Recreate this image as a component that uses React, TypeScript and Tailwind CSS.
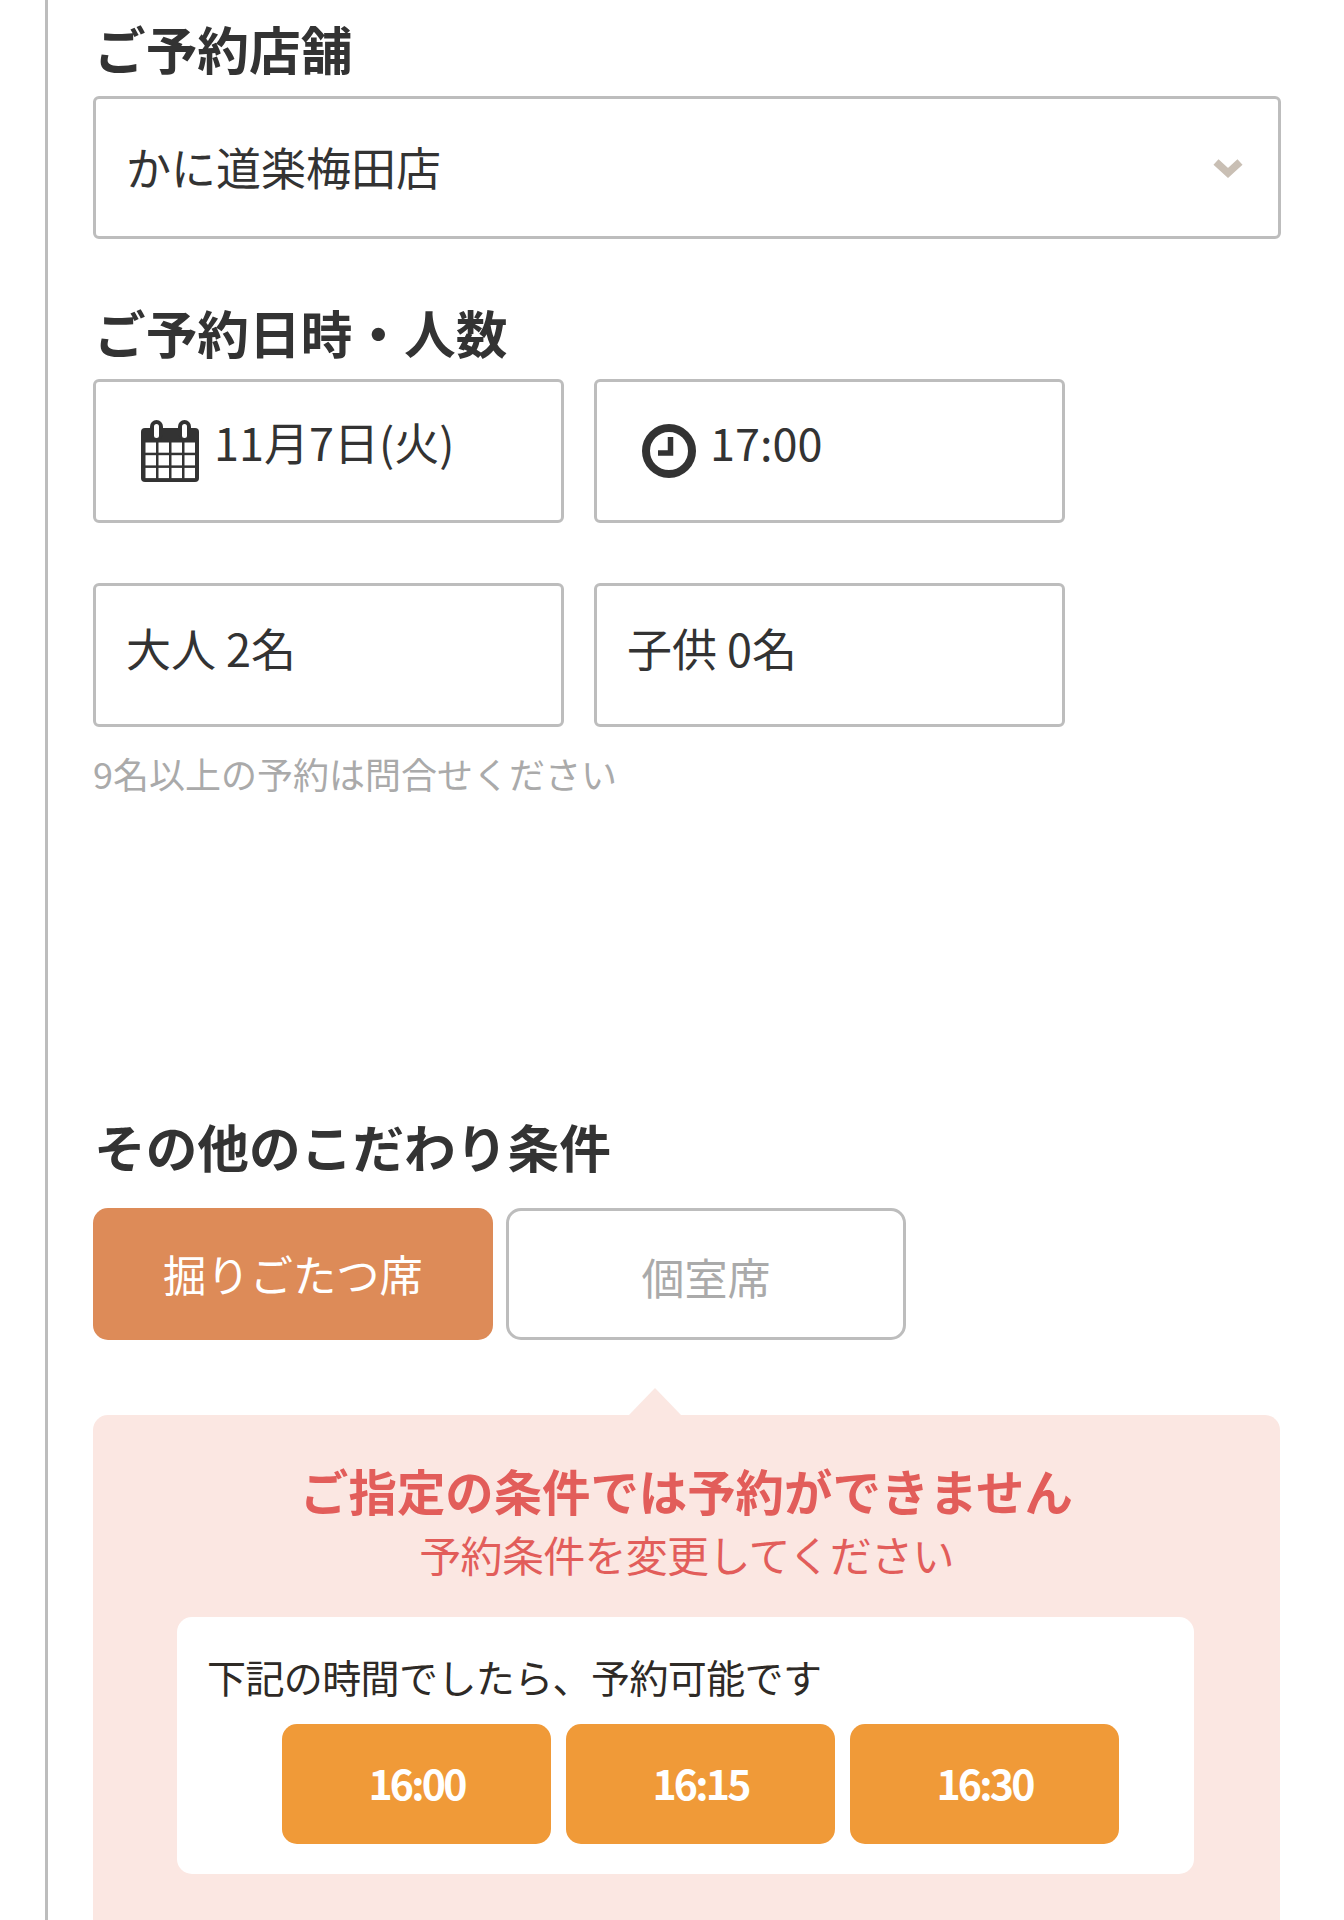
import React from "react";

const font = { fontFamily: '"Noto Sans CJK JP", "Noto Sans", sans-serif' };

function CalendarIcon() {
  const cells = [];
  for (let r = 0; r < 3; r++) {
    for (let c = 0; c < 4; c++) {
      cells.push(<rect key={`${r}-${c}`} x={4.5 + c * 13} y={22.5 + r * 12.7} width="10.5" height="10.2" fill="#fff" />);
    }
  }
  return (
    <svg width="58" height="62" viewBox="0 0 58 62" className="shrink-0">
      <rect x="0" y="8" width="58" height="54" rx="4" fill="#333" />
      <rect x="9" y="0" width="13" height="20" rx="6.5" fill="#333" />
      <rect x="37" y="0" width="13" height="20" rx="6.5" fill="#333" />
      <rect x="13" y="4" width="5" height="14" rx="2.5" fill="#fff" />
      <rect x="41" y="4" width="5" height="14" rx="2.5" fill="#fff" />
      {cells}
    </svg>
  );
}

function ClockIcon() {
  return (
    <svg width="54" height="54" viewBox="0 0 54 54" className="shrink-0">
      <circle cx="27" cy="27" r="23" fill="none" stroke="#333" strokeWidth="8" />
      <path d="M28.5 13v16H16" fill="none" stroke="#333" strokeWidth="5.5" />
    </svg>
  );
}

function Heading({ children }: { children: React.ReactNode }) {
  return <h2 className="text-[51.7px] font-bold leading-[66px] text-[#333] ml-[1px]">{children}</h2>;
}

function Box({ children, className = "" }: { children: React.ReactNode; className?: string }) {
  return (
    <div className={`flex h-[144px] w-[471px] items-center rounded-[6px] border-[3px] border-[#bdbdbd] bg-white text-[45px] text-[#333] ${className}`}>
      {children}
    </div>
  );
}

export default function App() {
  return (
    <div className="h-[1920px] w-[1344px] overflow-hidden bg-white" style={font}>
      <div className="ml-[45px] h-full border-l-[3px] border-[#bdbdbd] pl-[45px]">
        <div className="pt-[15px]">
          <Heading>ご予約店舗</Heading>
        </div>
        <div className="mt-[15px] flex h-[143px] w-[1188px] items-center justify-between rounded-[6px] border-[3px] border-[#bdbdbd] pl-[30px] pr-[35px] text-[45px] text-[#333]">
          <span className="leading-none -mt-[2px]">かに道楽梅田店</span>
          <svg width="30" height="22" viewBox="0 0 30 22">
            <path d="M3 5l12 11L27 5" fill="none" stroke="#c9bfb4" strokeWidth="7.5" />
          </svg>
        </div>

        <div className="mt-[60px]">
          <Heading>ご予約日時・人数</Heading>
        </div>
        <div className="mt-[14px] flex gap-[30px]">
          <Box className="pl-[45px]">
            <span className="mt-[-1px]"><CalendarIcon /></span>
            <span className="ml-[15px] leading-none -mt-[19px]">11月7日(火)</span>
          </Box>
          <Box className="pl-[45px]">
            <span className="mt-[0px]"><ClockIcon /></span>
            <span className="ml-[14px] leading-none -mt-[19px]">17:00</span>
          </Box>
        </div>
        <div className="mt-[60px] flex gap-[30px]">
          <Box className="pl-[30px]"><span className="leading-none -mt-[16px]">大人 2名</span></Box>
          <Box className="pl-[30px]"><span className="leading-none -mt-[16px]">子供 0名</span></Box>
        </div>
        <p className="mt-[25px] text-[36px] leading-[42px] text-[#aaaaaa]">9名以上の予約は問合せください</p>

        <div className="mt-[319px]">
          <Heading>その他のこだわり条件</Heading>
        </div>
        <div className="mt-[29px] flex gap-[13px]">
          <div className="flex h-[132px] w-[400px] items-center justify-center rounded-[15px] bg-[#dd8b58] pb-[1px] text-[43.3px] text-white">
            掘りごたつ席
          </div>
          <div className="flex h-[132px] w-[400px] items-center justify-center rounded-[15px] border-[3px] border-[#bdbdbd] pt-[4px] text-[43px] text-[#aaaaaa]">
            個室席
          </div>
        </div>

        <div className="relative mt-[75px] h-[600px] w-[1187px] rounded-t-[15px] bg-[#fbe7e2] text-center">
          <div className="absolute -top-[27px] left-[536px] h-0 w-0 border-x-[26px] border-b-[27px] border-x-transparent border-b-[#fbe7e2]" />
          <p className="pt-[43px] text-[48.4px] font-bold leading-[64px] text-[#e25d5a]">ご指定の条件では予約ができません</p>
          <p className="pt-[5px] text-[42px] leading-[54px] tracking-[-0.7px] text-[#e25d5a]">予約条件を変更してください</p>
          <div className="ml-[84px] mt-[36px] h-[257px] w-[1017px] rounded-[15px] bg-white pl-[30px] pt-[32px] text-left">
            <p className="text-[39px] leading-[54px] tracking-[-0.6px] text-[#2e2a26]">下記の時間でしたら、予約可能です</p>
            <div className="ml-[75px] mt-[21px] flex gap-[15px]">
              {["16:00", "16:15", "16:30"].map((t) => (
                <div key={t} className="flex h-[120px] w-[269px] items-center justify-center rounded-[15px] bg-[#f09a38] pb-[2px] text-[41px] font-bold tracking-[-2.8px] text-white">
                  {t}
                </div>
              ))}
            </div>
          </div>
        </div>
      </div>
    </div>
  );
}
